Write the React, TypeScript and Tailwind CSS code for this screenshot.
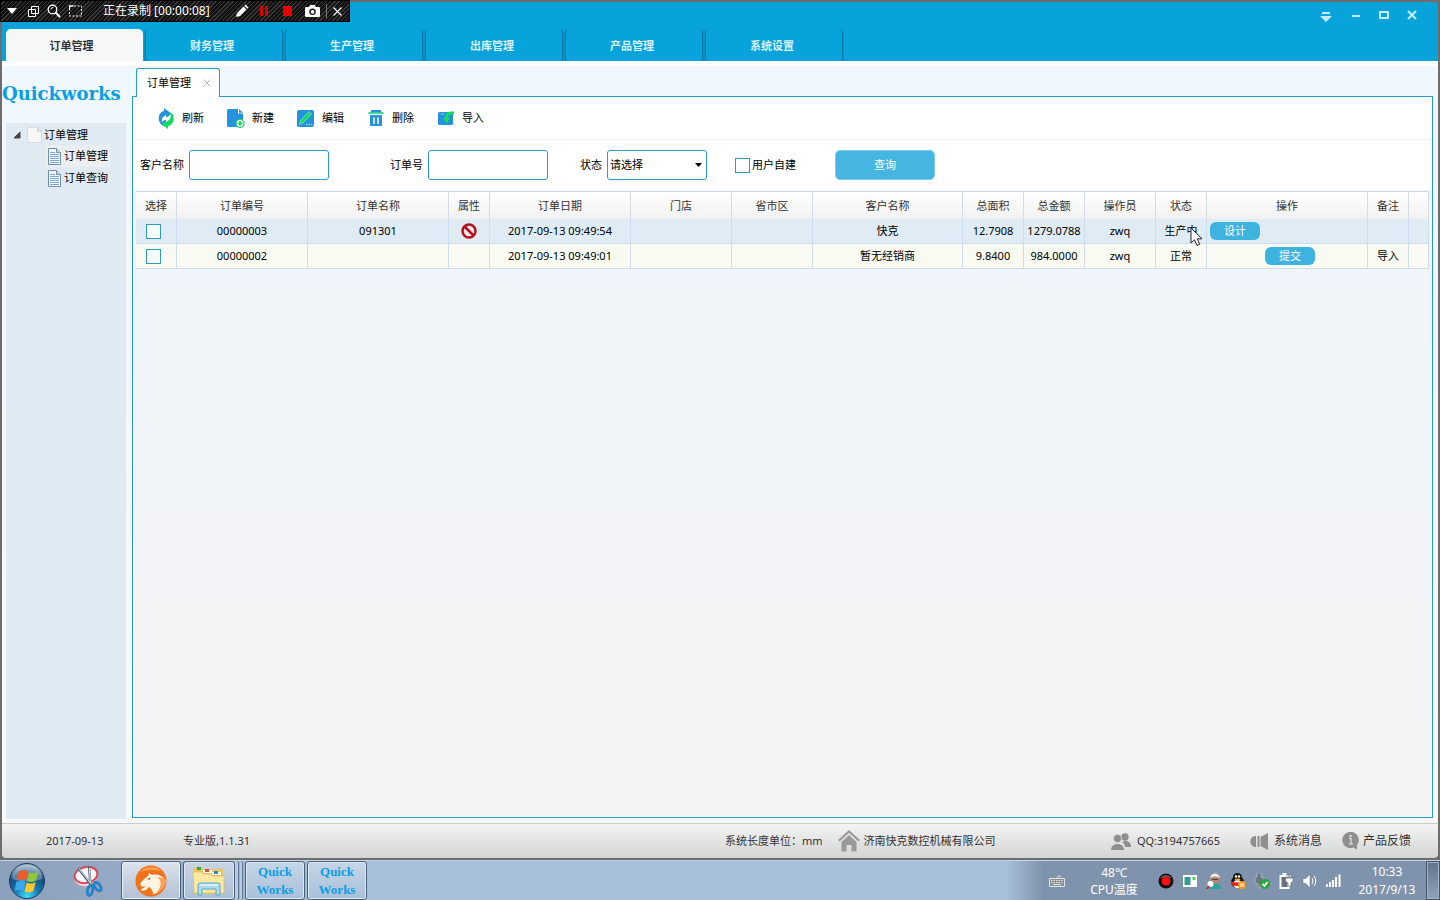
import type { ReactNode } from "react";

const modules = ["订单管理", "财务管理", "生产管理", "出库管理", "产品管理", "系统设置"];

const columns = [
  { title: "选择", width: "w-[41px]" },
  { title: "订单编号", width: "w-[131px]" },
  { title: "订单名称", width: "w-[141px]" },
  { title: "属性", width: "w-[41px]" },
  { title: "订单日期", width: "w-[141px]" },
  { title: "门店", width: "w-[101px]" },
  { title: "省市区", width: "w-[81px]" },
  { title: "客户名称", width: "w-[150px]" },
  { title: "总面积", width: "w-[61px]" },
  { title: "总金额", width: "w-[61px]" },
  { title: "操作员", width: "w-[71px]" },
  { title: "状态", width: "w-[51px]" },
  { title: "操作", width: "w-[161px]" },
  { title: "备注", width: "w-[41px]" },
  { title: "", width: "w-[20px]" },
];

type Order = {
  id: string;
  name: string;
  blocked: boolean;
  date: string;
  customer: string;
  area: string;
  amount: string;
  operator: string;
  status: string;
  action: string;
  note: string;
};

const orders: Order[] = [
  {
    id: "00000003",
    name: "091301",
    blocked: true,
    date: "2017-09-13 09:49:54",
    customer: "快克",
    area: "12.7908",
    amount: "1279.0788",
    operator: "zwq",
    status: "生产中",
    action: "设计",
    note: "",
  },
  {
    id: "00000002",
    name: "",
    blocked: false,
    date: "2017-09-13 09:49:01",
    customer: "暂无经销商",
    area: "9.8400",
    amount: "984.0000",
    operator: "zwq",
    status: "正常",
    action: "提交",
    note: "导入",
  },
];

const checkboxClass =
  "size-[15px] shrink-0 appearance-none border border-[#2a9cc4] bg-white checked:bg-[#45b6e2]";

function RecorderBar() {
  return (
    <div className="absolute top-0 left-0 z-10 flex h-[22px] w-[350px] items-center border border-black bg-[repeating-linear-gradient(135deg,#101010_0px,#101010_2px,#3a3a3a_2px,#3a3a3a_3px)] text-white">
      <button type="button" aria-label="菜单" className="flex w-[22px] justify-center">
        <svg width="12" height="6" viewBox="0 0 12 6">
          <path d="M1 0h10L6 6z" fill="#fff" />
        </svg>
      </button>
      <button type="button" aria-label="窗口" className="flex w-[20px] justify-center">
        <svg width="11" height="11" viewBox="0 0 11 11" fill="none" stroke="#fff">
          <path d="M3.500 .5h7v7h-7zM.5 3.500h7v7h-7z" />
        </svg>
      </button>
      <button type="button" aria-label="缩放" className="flex w-[21px] justify-center">
        <svg width="14" height="14" viewBox="0 0 14 14" fill="none" stroke="#fff">
          <circle cx="5.500" cy="5.500" r="4.300" strokeWidth="1.300" />
          <path d="M8.500 8.500L13 13" strokeWidth="2" />
          <path d="M4 5a2 2 0 0 1 2-1.500" />
        </svg>
      </button>
      <button type="button" aria-label="选区" className="flex w-[22px] justify-center">
        <svg width="13" height="12" viewBox="0 0 13 12" fill="none" stroke="#fff">
          <path d="M.5 5V1h4" strokeWidth="1.400" />
          <path d="M5 1h7.500v10H.5V5" strokeDasharray="2 1.500" />
        </svg>
      </button>
      <span className="ml-[17px] w-[130px] text-[12px] whitespace-nowrap">正在录制 [00:00:08]</span>
      <button type="button" aria-label="画笔" className="ml-[2px] flex size-[14px]">
        <svg width="14" height="14" viewBox="0 0 14 14">
          <path d="M1 13l1-4 6.500-6.500 3 3L5 12zM9.300 1.700l1.200-1.200 3 3-1.200 1.200z" fill="#fff" />
        </svg>
      </button>
      <button type="button" aria-label="暂停" className="ml-[11px] flex">
        <svg width="8" height="10" viewBox="0 0 8 10">
          <path d="M0 0h3v10H0zM5 0h3v10H5z" fill="#d80000" />
        </svg>
      </button>
      <button type="button" aria-label="停止" className="ml-[14px] flex">
        <svg width="11" height="10" viewBox="0 0 11 10">
          <path d="M1 0h9v10H1z" fill="#e60000" />
        </svg>
      </button>
      <button type="button" aria-label="截图" className="ml-[12px] flex">
        <svg width="15" height="12" viewBox="0 0 15 12">
          <path
            fillRule="evenodd"
            d="M1 2h3l1.200-2h4.600L11 2h3a1 1 0 0 1 1 1v8a1 1 0 0 1-1 1H1a1 1 0 0 1-1-1V3a1 1 0 0 1 1-1zm6.500 1.500a3.300 3.300 0 1 0 0 6.600 3.300 3.300 0 0 0 0-6.600z"
            fill="#fff"
          />
          <circle cx="7.500" cy="6.800" r="1.900" fill="#fff" />
        </svg>
      </button>
      <span className="mx-[6px] h-[14px] w-px bg-[#777]" />
      <button type="button" aria-label="关闭录制" className="flex">
        <svg width="9" height="9" viewBox="0 0 9 9" stroke="#fff" strokeWidth="1.200">
          <path d="M.5 .5l8 8M8.500 .5l-8 8" />
        </svg>
      </button>
    </div>
  );
}

function TitleBar() {
  return (
    <header className="flex h-[59px] shrink-0 flex-col justify-between rounded-tr bg-[#09a3dc]">
      <div className="flex h-[25px] items-center justify-end gap-4 pr-[20px]">
        <button type="button" aria-label="皮肤" className="mr-[2px] flex w-3 pt-[5px]">
          <svg width="12" height="10" viewBox="0 0 12 10" fill="#c4edfb">
            <path d="M2 0h8v2H2zM0 4h12L6 10z" />
          </svg>
        </button>
        <button type="button" aria-label="最小化" className="flex size-3 items-center justify-center">
          <svg width="12" height="12" viewBox="0 0 12 12" fill="#c4edfb">
            <path d="M2 6h8v2H2z" />
          </svg>
        </button>
        <button type="button" aria-label="最大化" className="flex size-3 items-center justify-center">
          <svg width="12" height="12" viewBox="0 0 12 12" fill="none" stroke="#c4edfb" strokeWidth="2">
            <path d="M2 3h8v6H2z" />
          </svg>
        </button>
        <button type="button" aria-label="关闭" className="flex size-3 items-center justify-center">
          <svg width="12" height="12" viewBox="0 0 12 12" stroke="#c4edfb" strokeWidth="2">
            <path d="M2 2l8 8M10 2l-8 8" />
          </svg>
        </button>
      </div>
      <nav className="flex h-8 gap-[2px] pl-1">
        {modules.map((name, i) =>
          i === 0 ? (
            <button
              key={name}
              type="button"
              className="w-[137px] rounded-t-[5px] bg-[#f6f8f8] pt-[2px] pr-[6px] font-bold text-[#333]"
            >
              {name}
            </button>
          ) : (
            <button
              key={name}
              type="button"
              className="w-[138px] rounded-t-[5px] border border-transparent border-x-[#0a7ba8] pt-[2px] pr-1 font-bold text-[#d9f2fb] shadow-[1px_0_0_#0990c2,-1px_0_0_#0990c2]"
            >
              {name}
            </button>
          ),
        )}
      </nav>
    </header>
  );
}

function DocIcon() {
  return (
    <svg width="13" height="17" viewBox="0 0 13 17">
      <path d="M.5 .5h8l4 4v12H.5z" fill="#f4f9fd" stroke="#6f8fb0" />
      <path d="M8.500 .5v4h4" fill="#c9dced" stroke="#6f8fb0" />
      <path d="M2 4.500h5M2 6.500h9M2 8.500h9M2 10.500h9M2 12.500h9M2 14.500h9" stroke="#7ba6cf" />
    </svg>
  );
}

function Sidebar() {
  return (
    <aside className="flex w-[130px] shrink-0 flex-col">
      <div className="flex h-[62px] items-center pt-1 font-['DejaVu_Serif',serif] text-[18px] font-bold text-[#0c9fe0]">
        Quickworks
      </div>
      <ul className="mr-[6px] mb-1 ml-1 flex-1 bg-[#dfeaf2] text-black">
        <li>
          <div className="flex h-[22px] items-center pt-px pl-[7px]">
            <svg width="8" height="8" viewBox="0 0 8 8">
              <path d="M7 1v6H1z" fill="#444" stroke="#444" />
            </svg>
            <svg className="mr-[2px] ml-[6px]" width="15" height="16" viewBox="0 0 15 16">
              <path d="M.5 .5h10l4 4v11H.5z" fill="#f7f7f7" stroke="#d8dcdf" />
              <path d="M10.500 .5v4h4" fill="#e4e6e8" stroke="#d0d4d8" />
            </svg>
            订单管理
          </div>
          <ul>
            {["订单管理", "订单查询"].map((name, i) => (
              <li key={name} className="flex h-[22px] pl-[40px]">
                <a
                  href="#"
                  className={
                    i === 0
                      ? "flex items-center gap-[3px] bg-[#ebeff2] px-[2px]"
                      : "flex items-center gap-[3px] px-[2px]"
                  }
                >
                  <DocIcon />
                  {name}
                </a>
              </li>
            ))}
          </ul>
        </li>
      </ul>
    </aside>
  );
}

const tools: { label: string; icon: ReactNode }[] = [
  {
    label: "刷新",
    icon: (
      <>
        <path d="M10 18.500A8.200 8.200 0 0 1 8 2.700V0l6 4.500V10z" fill="#2492dc" />
        <path d="M14.500 4a8.200 8.200 0 0 1-2.500 14.300V21l-6-4.500 7-6z" fill="#12dd62" />
        <path d="M5.500 14l1-4.500 3.500-2.500.5 2.500L15 6.500l-1 4.500-3.500 3-.8-2.500z" fill="#fff" />
      </>
    ),
  },
  {
    label: "新建",
    icon: (
      <>
        <path d="M2.500 1H12v4.500h5V19H2.500A1.500 1.500 0 0 1 1 17.500v-15A1.500 1.500 0 0 1 2.500 1z" fill="#2492dc" />
        <path d="M13 1l4 3.700h-4z" fill="#2492dc" />
        <circle cx="14" cy="15.500" r="4" fill="#fff" stroke="#12cf5c" strokeWidth="1.200" />
        <path d="M11.500 15.500h5M14 13v5" stroke="#12cf5c" strokeWidth="1.500" />
      </>
    ),
  },
  {
    label: "编辑",
    icon: (
      <>
        <rect x="1" y="2" width="17" height="17" rx="2" fill="#2492dc" />
        <path d="M3.500 16.500l1-4L13 3.500l2.500 2.500L7 15z" fill="#12dd62" stroke="#c9f5e0" strokeWidth=".5" />
        <path d="M10 16.500h1.500M12.500 16.500H14M15 16.500h1.500" stroke="#bfe2f7" />
      </>
    ),
  },
  {
    label: "删除",
    icon: (
      <>
        <path d="M5 2h10v2H5z" fill="#2492dc" />
        <path d="M2.500 5h15" stroke="#19bf83" strokeWidth="1.600" />
        <path d="M4 7h12v11H4z" fill="#2492dc" />
        <path d="M8 9.500V16M12 9.500V16" stroke="#fff" strokeWidth="1.500" />
      </>
    ),
  },
  {
    label: "导入",
    icon: (
      <>
        <rect x="2" y="4" width="15" height="13" rx="1.500" fill="#2492dc" />
        <path d="M18 3.500c-6-.5-8.500 1-9 6H6.500l4 5.500 4-5.500H12C12.500 7 14 6 18 6z" fill="#12dd62" />
        <path d="M8 6H5" stroke="#8dccf2" />
      </>
    ),
  },
];

function Toolbar() {
  return (
    <div className="flex h-[43px] items-center border-b border-[#f3f6f9] pl-[23px]">
      {tools.map((tool) => (
        <button key={tool.label} type="button" className="flex w-[70px] items-center gap-[6px]">
          <svg width="20" height="21" viewBox="0 0 20 21">
            {tool.icon}
          </svg>
          {tool.label}
        </button>
      ))}
    </div>
  );
}

function FilterForm() {
  return (
    <form className="flex h-[50px] items-center pl-[7px]" onSubmit={(e) => e.preventDefault()}>
      <label htmlFor="customer">客户名称</label>
      <input
        id="customer"
        className="ml-[5px] h-[30px] w-[140px] rounded-[3px] border border-[#2a9cc4] bg-white px-1"
      />
      <label htmlFor="orderNo" className="ml-[61px]">
        订单号
      </label>
      <input
        id="orderNo"
        className="ml-[5px] h-[30px] w-[120px] rounded-[3px] border border-[#2a9cc4] bg-white px-1"
      />
      <label htmlFor="status" className="ml-8">
        状态
      </label>
      <div className="relative ml-[5px]">
        <select
          id="status"
          className="h-[30px] w-[100px] appearance-none rounded-[3px] border border-[#2a9cc4] bg-white px-[2px]"
        >
          <option>请选择</option>
          <option>正常</option>
          <option>生产中</option>
        </select>
        <svg className="pointer-events-none absolute top-[13px] right-[5px]" width="7" height="4" viewBox="0 0 7 4">
          <path d="M0 0h7L3.500 4z" />
        </svg>
      </div>
      <input id="selfBuilt" type="checkbox" className={`${checkboxClass} ml-7`} />
      <label htmlFor="selfBuilt" className="ml-[2px]">
        用户自建
      </label>
      <button
        type="submit"
        className="ml-[39px] h-[30px] w-[100px] rounded-[5px] border border-[#7fcdec] bg-[#45b6e2] text-white"
      >
        查询
      </button>
    </form>
  );
}

function OrderTable() {
  return (
    <div className="mx-[3px] border-t border-[#d3dae4]">
      <table className="w-full table-fixed border-separate border-spacing-0 text-center whitespace-nowrap">
        <thead>
          <tr className="h-[27px] bg-linear-to-b from-white to-[#f1f1f2] text-[#333]">
            {columns.map((col, i) => (
              <th key={i} className={`${col.width} border-r border-[#d3dbe8] p-0 font-normal`}>
                {col.title}
              </th>
            ))}
          </tr>
        </thead>
        <tbody className="text-black [&_td]:h-[25px] [&_td]:border-r [&_td]:border-b [&_td]:border-[#d0dcec] [&_td]:p-0">
          {orders.map((order, i) => (
            <tr key={order.id} className={i === 0 ? "bg-[#dfebf5]" : "bg-[#f9fbf3]"}>
              <td>
                <input
                  type="checkbox"
                  aria-label={order.id}
                  className={`${checkboxClass} mr-[5px] block justify-self-center`}
                />
              </td>
              <td>{order.id}</td>
              <td>{order.name}</td>
              <td>
                {order.blocked && (
                  <svg className="mx-auto" width="16" height="16" viewBox="0 0 16 16" fill="none" stroke="#b3121d">
                    <circle cx="8" cy="8" r="6.500" fill="#f3e9ee" strokeWidth="2.500" />
                    <path d="M3.500 3.500l9 9" strokeWidth="2.500" />
                  </svg>
                )}
              </td>
              <td>{order.date}</td>
              <td />
              <td />
              <td>{order.customer}</td>
              <td>{order.area}</td>
              <td>{order.amount}</td>
              <td>{order.operator}</td>
              <td className="relative">
                {order.status}
                {i === 0 && (
                  <svg className="absolute top-[8px] right-[3px] z-10" width="13" height="20" viewBox="0 0 13 20">
                    <path
                      d="M1 1v15l3.500-3.200L7 18.500l2.700-1.200-2.400-5.500H12z"
                      fill="#fff"
                      stroke="#222"
                      strokeLinejoin="round"
                    />
                  </svg>
                )}
              </td>
              <td>
                <div className="grid grid-cols-[50px_50px] gap-[5px] pl-[3px]">
                  <button
                    type="button"
                    className={
                      order.action === "提交"
                        ? "col-start-2 h-[18px] rounded-[6px] bg-[#3fb3e0] text-white"
                        : "h-[18px] rounded-[6px] bg-[#3fb3e0] text-white"
                    }
                  >
                    {order.action}
                  </button>
                </div>
              </td>
              <td>{order.note}</td>
              <td />
            </tr>
          ))}
        </tbody>
      </table>
    </div>
  );
}

function Workspace() {
  return (
    <main className="flex min-w-0 flex-1 flex-col pr-[5px] pb-[5px]">
      <div className="flex pt-[2px] pl-1">
        <div className="relative z-[1] -mb-px flex h-[29px] w-[84px] items-center justify-between rounded-t-[3px] border border-b-0 border-[#2a9cc4] bg-white pr-2 pl-[10px] text-black">
          订单管理
          <button type="button" aria-label="关闭标签">
            <svg width="8" height="8" viewBox="0 0 8 8" stroke="#b5b5b5">
              <path d="M.5 .5l7 7M7.500 .5l-7 7" />
            </svg>
          </button>
        </div>
      </div>
      <section className="flex-1 border border-[#2a9cc4] bg-linear-to-b from-[#eff6fd] to-[#f4f4f4]">
        <div className="mb-px bg-white text-black">
          <Toolbar />
          <FilterForm />
        </div>
        <OrderTable />
      </section>
    </main>
  );
}

function StatusBar() {
  return (
    <footer className="flex h-[35px] shrink-0 items-center rounded-b-[4px] border-t border-[#c6cbce] bg-linear-to-b from-[#f4f4f4] to-[#d3d4d4] text-[#333]">
      <div className="flex w-1/2 pl-11">
        <span className="w-[137px]">2017-09-13</span>
        <span>专业版,1.1.31</span>
      </div>
      <div className="flex items-center pl-[5px]">
        <span>系统长度单位：mm</span>
        <svg className="mr-1 ml-[15px]" width="22" height="22" viewBox="0 0 22 22" fill="#999">
          <path d="M11 0L0 10l1.500 1.500L11 3l9.500 8.500L22 10z" />
          <path d="M11 5l7.500 7v9.500h-5V15h-5v6.500h-5V12z" />
        </svg>
        <span>济南快克数控机械有限公司</span>
      </div>
      <div className="ml-auto flex items-center pr-[27px]">
        <svg className="mr-[6px]" width="20" height="17" viewBox="0 0 20 17" fill="#8e8e8e">
          <circle cx="14" cy="4" r="3.700" />
          <path d="M11 9c4-2 9-1 9 5h-6c0-2-1-4-3-5z" />
          <circle cx="6.500" cy="5.500" r="4" stroke="#e6e6e6" strokeWidth=".6" />
          <path d="M0 17c0-8 13-8 13 0z" />
        </svg>
        <span>QQ:3194757665</span>
        <svg className="mr-[5px] ml-[30px]" width="19" height="17" viewBox="0 0 19 17" fill="#8e8e8e">
          <path d="M6 3v11C-1.500 14-1.500 3 6 3zM7.500 3h2v11h-2zM10.500 4L18 0v17l-7.500-4z" />
        </svg>
        <a href="#" className="text-[12px]">
          系统消息
        </a>
        <svg className="mr-1 ml-5" width="17" height="18" viewBox="0 0 17 18">
          <path d="M8.500 0a8 8 0 0 1 6.500 13v4.500L11 15.500A8 8 0 1 1 8.500 0z" fill="#8e8e8e" />
          <path d="M7 6.500h2v5.500M7 12h4" stroke="#e6e6e6" strokeWidth="1.200" fill="none" />
          <circle cx="8.500" cy="4" r="1.200" fill="#e6e6e6" />
        </svg>
        <a href="#" className="text-[12px]">
          产品反馈
        </a>
      </div>
    </footer>
  );
}

function StartOrb() {
  return (
    <svg width="38" height="38" viewBox="0 0 38 38">
      <defs>
        <radialGradient id="orb" cx=".5" cy=".95" r=".9">
          <stop offset="0" stopColor="#3fe0ff" />
          <stop offset=".4" stopColor="#1678b4" />
          <stop offset=".75" stopColor="#174a78" />
          <stop offset="1" stopColor="#8fb2cc" />
        </radialGradient>
      </defs>
      <circle cx="19" cy="19" r="17.500" fill="url(#orb)" stroke="#1d3c5c" />
      <path d="M4 17a15 14 0 0 1 30 0c-9 3-21 3-30 0z" fill="#fff" opacity=".3" />
      <path d="M11 9.500c3-2 6-2 9 0L18 18.500c-3-1.500-6-1.500-9.500 0z" fill="#f0592a" />
      <path d="M21 10c3 1.500 6 1.500 9.500-.5L28 18.500c-3 2-6 2-9 .5z" fill="#8fc73e" />
      <path d="M8.200 20c3-2 6-2 9.500 0l-2 9c-3-1.500-6-1.500-9 0z" fill="#3aa7e8" />
      <path d="M18.700 20.500c3 1.500 6 1.500 9-.5l-2.200 9c-3 2-6 2-9 .5z" fill="#fcc62d" />
    </svg>
  );
}

function SnippingIcon() {
  return (
    <svg width="32" height="34" viewBox="0 0 32 34" fill="none">
      <path d="M1.500 13c0 4 1 5 2 6 5 5 15 4 19-2l2-5z" fill="#f3eff4" stroke="#dfa6ae" />
      <ellipse cx="13" cy="11" rx="11.500" ry="8" fill="#f7f5f9" stroke="#d34a57" strokeWidth="2" transform="rotate(-12 13 11)" />
      <path d="M5 4l14 18M16 2l1.500 20" stroke="#5e6b78" strokeWidth="2.400" />
      <path d="M6 4.500l12 15M16.500 4l.8 15" stroke="#e3eaf0" />
      <ellipse cx="17" cy="26.500" rx="2.600" ry="5" stroke="#2882c4" strokeWidth="3" transform="rotate(12 17 26.500)" />
      <ellipse cx="24.500" cy="22.500" rx="2.600" ry="5" stroke="#2882c4" strokeWidth="3" transform="rotate(-38 24.500 22.500)" />
    </svg>
  );
}

function BrowserIcon() {
  return (
    <svg width="32" height="32" viewBox="0 0 32 32">
      <circle cx="16" cy="16" r="15.500" fill="#f0721a" />
      <path d="M5 7A15 15 0 0 1 27 6c-8-2-15-1-22 1z" fill="#ff9c4b" />
      <path
        d="M5 19l3-4 5-4 1-3 3 2c6-1.500 11 1 14 6-2 7-7 12-13 13.500 0-4-2-6.500-4-7.500l-3 3-4 1-1-2 3-1 1-2-3 1z"
        fill="#fff3e2"
      />
      <path d="M12 14l3.500-1.500-1 2.500z" fill="#c2500a" />
      <path d="M22 12c5 3 5 10-1 16 7-2 10-8 10-13-2-2-5-3-9-3z" fill="#f9a457" />
    </svg>
  );
}

function ExplorerIcon() {
  return (
    <svg width="34" height="32" viewBox="0 0 34 32">
      <path d="M2 4l1-2h6l1 2h21v25H2z" fill="#e9c85e" />
      <path d="M5 2h4v3H5z" fill="#35a845" />
      <path d="M11 5h9v3h-9z" fill="#fff" />
      <path d="M13 4h4v3h-4z" fill="#d9502d" />
      <path d="M20 7h9v3h-9z" fill="#fff" />
      <path d="M22 6h4v3h-4z" fill="#2f86d1" />
      <path d="M1 7h9l1 2h8l1 2h12v17H2z" fill="#fbe9a0" stroke="#d9b64d" strokeWidth=".6" />
      <path d="M6 30V20q0-2 2-2h18q2 0 2 2v10h-4v-6H10v6z" fill="#a9dcf1" stroke="#55a8cc" />
      <path d="M8 20h18" stroke="#fff" />
    </svg>
  );
}

function QuickWorksTask() {
  return (
    <button
      type="button"
      className="mr-[2px] flex h-[39px] w-[60px] flex-col items-center justify-center rounded-[3px] border border-[#4b6079] bg-linear-to-b from-[#c6d6e8] to-[#a9bfd9] font-['Liberation_Serif',serif] text-[13px] leading-[18px] font-bold text-[#0a9de4] shadow-[inset_0_0_0_1px_#dbe7f3]"
    >
      <span>Quick</span>
      <span>Works</span>
    </button>
  );
}

const tray: ReactNode[] = [
  <>
    <circle cx="8" cy="8" r="7.500" fill="#1a0a0a" />
    <circle cx="8" cy="8" r="4.500" fill="#f01212" />
    <path d="M3 5a6 5 0 0 1 10 0" stroke="#888" fill="none" />
  </>,
  <>
    <path d="M1 2h14v12H1z" fill="#fff" />
    <path d="M2.500 4h6v8h-6z" fill="#3a9c8c" />
    <path d="M10.500 4h3v3h-3z" fill="#61c06a" />
  </>,
  <>
    <path d="M3 16c0-6 12-8 13 0z" fill="#2fa39a" />
    <circle cx="9" cy="5.500" r="5" fill="#b58674" />
    <path d="M4 5c1-6 9-6 10 0-3-2-6-2-10 0z" fill="#eee" />
    <path d="M6 6.500h6" stroke="#443" />
    <circle cx="4.500" cy="11" r="3" fill="#fff" />
    <path d="M3 13l-2 3" stroke="#a33" strokeWidth="2" />
  </>,
  <>
    <ellipse cx="7.500" cy="9" rx="6.500" ry="6" fill="#111" />
    <circle cx="7.500" cy="4.500" r="4.500" fill="#111" />
    <ellipse cx="7.500" cy="11" rx="4" ry="4" fill="#fff" />
    <path d="M1 8q6.500 3 13 0v4q-6.500 2-13 0z" fill="#e02020" />
    <circle cx="6" cy="3.500" r="1.200" fill="#fff" />
    <circle cx="9" cy="3.500" r="1.200" fill="#fff" />
    <ellipse cx="7.500" cy="6.500" rx="3" ry="1" fill="#f5a623" />
    <circle cx="12" cy="12" r="4" fill="#f89a1c" />
    <path d="M10 11h4M10 13h4" stroke="#fff" />
  </>,
  <>
    <path d="M3 0h4v4h2v5l-3 2v4H4v-4L1 9V4h2z" fill="#6b7681" stroke="#cbd3dc" strokeWidth=".5" />
    <circle cx="11" cy="11" r="5" fill="#2ba53a" />
    <path d="M8.500 11l2 2 3-4" stroke="#fff" strokeWidth="1.800" fill="none" />
  </>,
  <>
    <path d="M2.500 3h8v12h-8z" fill="#66727f" stroke="#fff" strokeWidth="2" />
    <path d="M4.500 0h4v2h-4z" fill="#fff" />
    <path d="M7.500 5H15v3l-2 2v3h-3v-3L7.500 8zM9 1.500h1.500V5H9zM12 1.500h1.500V5H12z" fill="#fff" stroke="#444f5c" strokeWidth=".5" />
  </>,
  <>
    <path d="M1 5.500h3L8 1v14l-4-4.500H1z" fill="#fff" stroke="#5c6a7a" strokeWidth=".5" />
    <path d="M10 5q2 3 0 6M12 3q3.500 5 0 10" stroke="#fff" fill="none" />
  </>,
  <path d="M0 11h2v3H0zM3 9h2v5H3zM6 7h2v7H6zM9 4h2v10H9zM12.500 1.500h2V14h-2z" fill="#fff" />,
];

function Taskbar() {
  return (
    <div className="flex h-10 shrink-0 items-center border-t border-[#c5d3e2] bg-linear-to-r from-[#8c9fbb] via-[#a6bfdb] via-25% to-[#a6bfdb]">
      <button type="button" aria-label="开始" className="ml-2">
        <StartOrb />
      </button>
      <button type="button" aria-label="截图工具" className="mr-4 ml-[27px]">
        <SnippingIcon />
      </button>
      <button
        type="button"
        aria-label="浏览器"
        className="mr-[2px] flex h-[39px] w-[60px] items-center justify-center rounded-[3px] border border-[#4b6079] bg-linear-to-b from-[#dbe3ec] to-[#b2c0d4] shadow-[inset_0_0_0_1px_#e8eff6]"
      >
        <BrowserIcon />
      </button>
      <button
        type="button"
        aria-label="资源管理器"
        className="flex h-[39px] w-[52px] items-center justify-center rounded-[3px] border border-[#4b6079] bg-linear-to-b from-[#c9d5e4] to-[#abbfd7] shadow-[inset_0_0_0_1px_#dbe7f3]"
      >
        <ExplorerIcon />
      </button>
      <span className="mr-px h-[39px] w-1 rounded-r-[3px] border-r border-[#5f7795] bg-[#b9cbe0]" />
      <span className="mr-[2px] h-[39px] w-[3px] rounded-r-[3px] border-r border-[#5f7795] bg-[#b9cbe0]" />
      <QuickWorksTask />
      <QuickWorksTask />
      <div className="ml-auto flex h-full items-center bg-linear-to-r from-[#a6bfdb] to-[#8093ac] to-[36px] pl-[42px] text-[12px] text-white">
        <svg className="mr-[9px]" width="16" height="12" viewBox="0 0 16 12" fill="none" stroke="#e3e6e9">
          <path d="M.5 3.500h15v8H.5z" fill="#8b8f94" />
          <path d="M2 5.500h12M2 7.500h12" strokeDasharray="1.500 1" />
          <path d="M4 9.500h8M8 3q0-2 4-2" />
        </svg>
        <div className="w-20 text-center leading-[17px]">
          <p>48℃</p>
          <p>CPU温度</p>
        </div>
        <div className="mr-[2px] flex">
          {tray.map((icon, i) => (
            <span key={i} className="flex w-6 justify-center">
              <svg width="16" height="16" viewBox="0 0 16 16">
                {icon}
              </svg>
            </span>
          ))}
        </div>
        <div className="w-[78px] text-center leading-[18px]">
          <p>10:33</p>
          <p>2017/9/13</p>
        </div>
        <button
          type="button"
          aria-label="显示桌面"
          className="h-full w-[14px] border border-[#43546a] bg-linear-to-b from-[#61748c] to-[#90a3ba] shadow-[inset_0_0_0_1px_#a3b3c5]"
        />
      </div>
    </div>
  );
}

function App() {
  return (
    <div className="relative flex min-h-screen flex-col bg-[#6d6d6d] font-['Noto_Sans','Noto_Sans_CJK_SC',sans-serif] text-[11px] leading-4">
      <RecorderBar />
      <div className="m-[2px] flex flex-1 flex-col">
        <TitleBar />
        <div className="flex flex-1 flex-col bg-linear-to-b from-[#f0f7fe] to-[#f8f8f8]">
          <div className="flex flex-1 border-t-[5px] border-white">
            <div className="-mt-[5px] flex">
              <Sidebar />
            </div>
            <Workspace />
          </div>
        </div>
        <StatusBar />
      </div>
      <Taskbar />
    </div>
  );
}

export default App;
